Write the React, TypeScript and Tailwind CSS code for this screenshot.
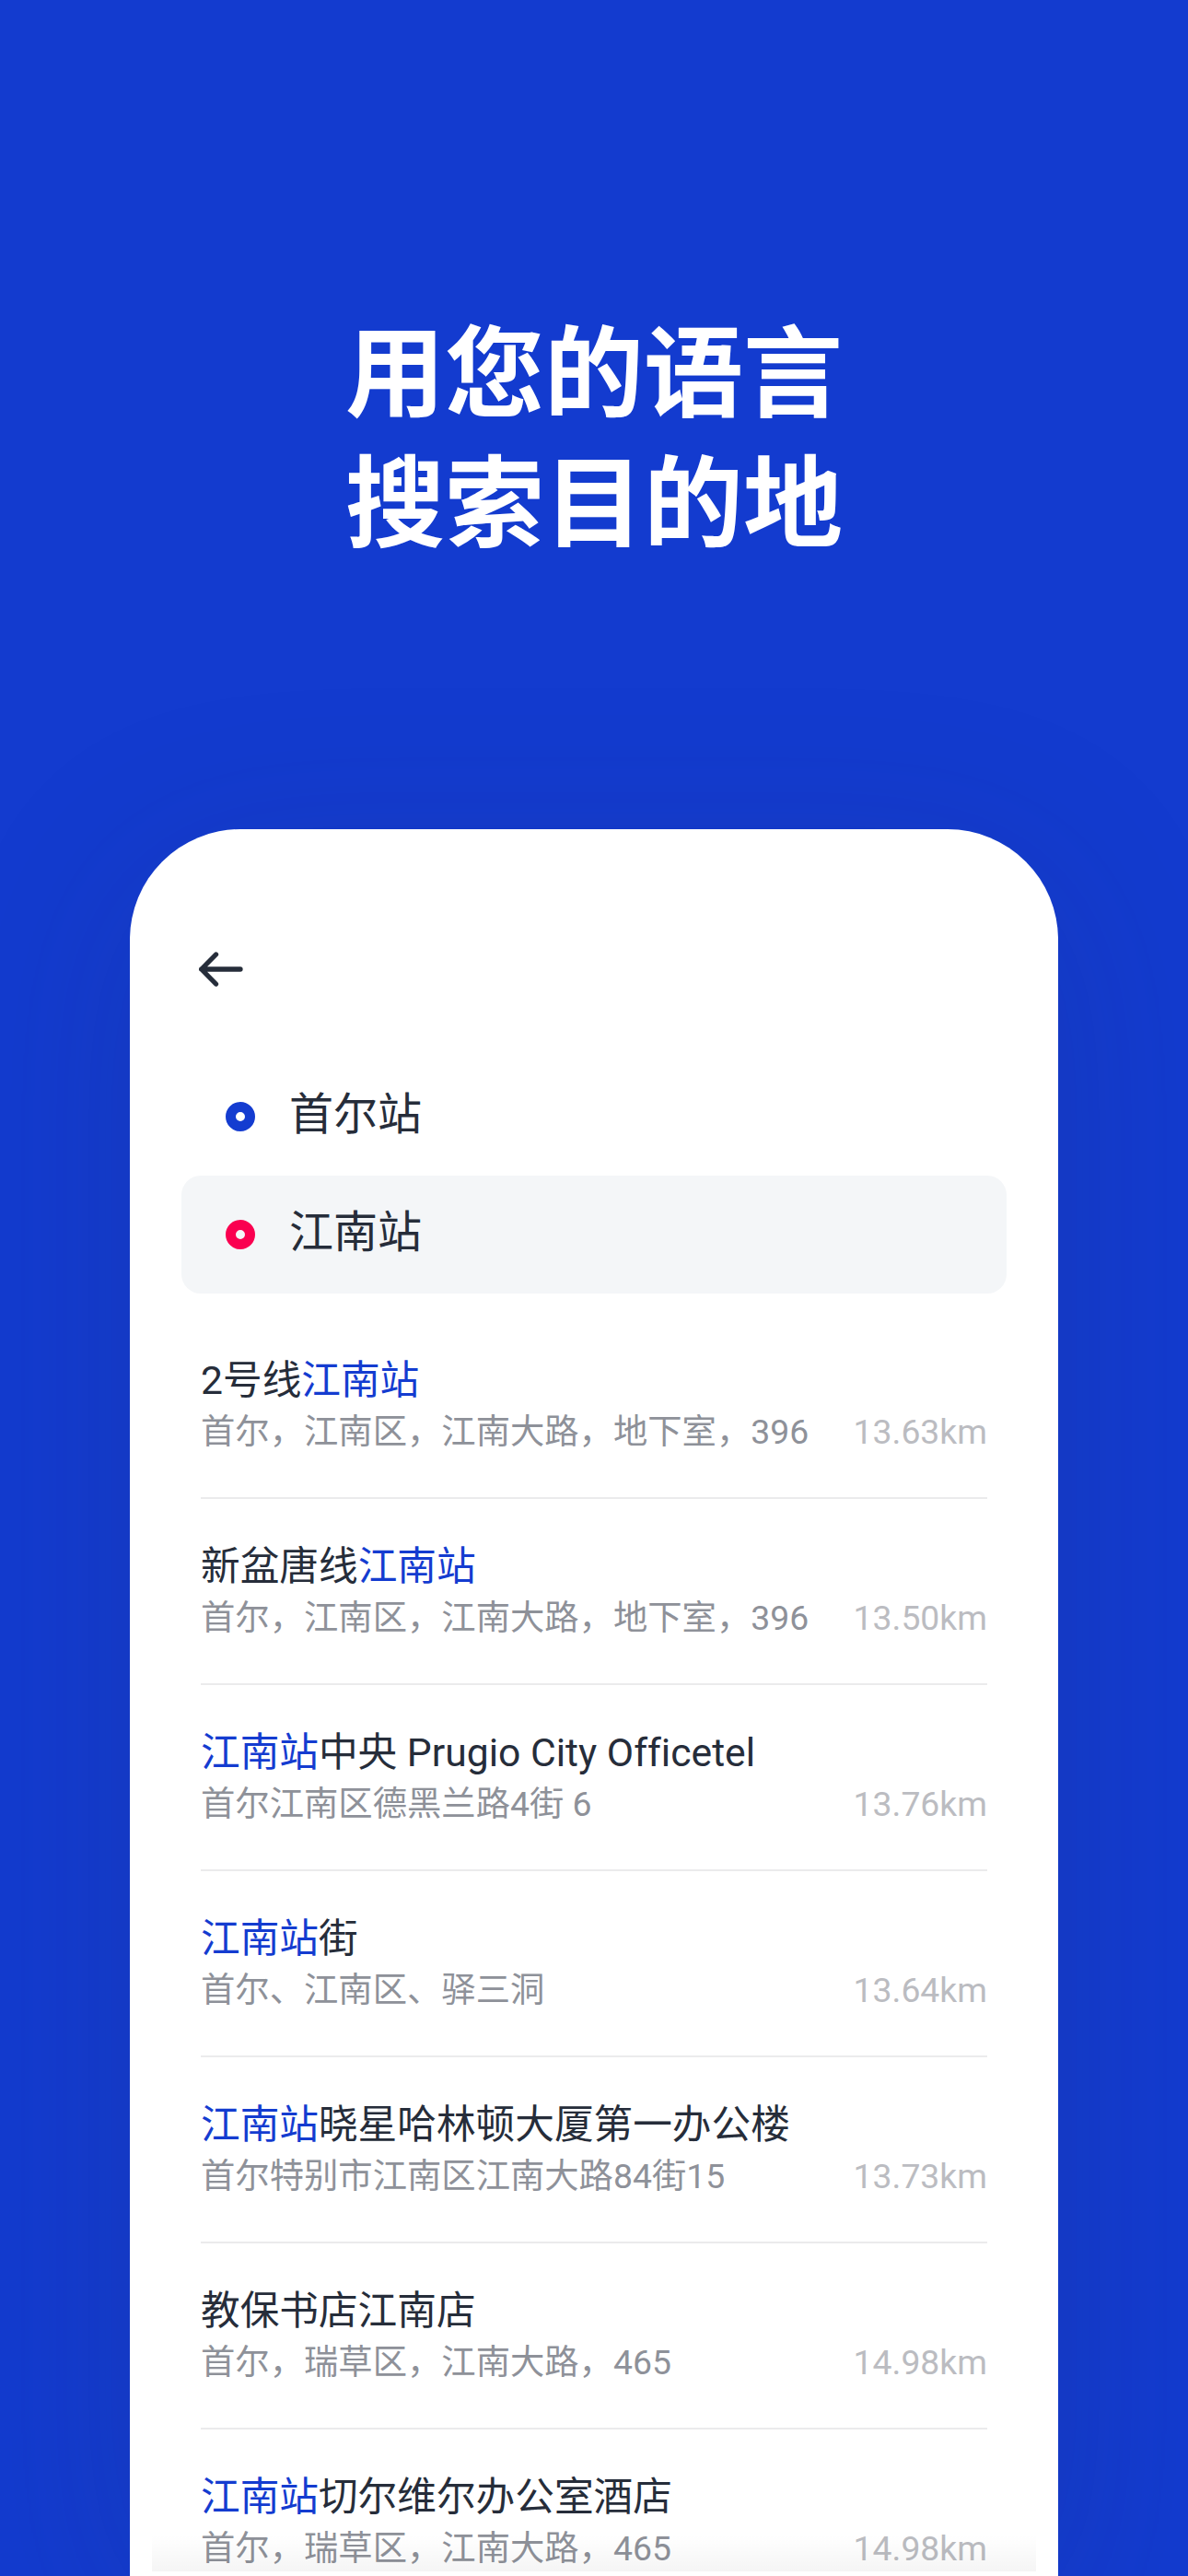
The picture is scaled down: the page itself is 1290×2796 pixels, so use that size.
type Part = { text: string; match?: boolean };

type Place = {
  title: Part[];
  address: string;
  distance: string;
};

const places: Place[] = [
  {
    title: [{ text: "2号线" }, { text: "江南站", match: true }],
    address: "首尔，江南区，江南大路，地下室，396",
    distance: "13.63km",
  },
  {
    title: [{ text: "新盆唐线" }, { text: "江南站", match: true }],
    address: "首尔，江南区，江南大路，地下室，396",
    distance: "13.50km",
  },
  {
    title: [{ text: "江南站", match: true }, { text: "中央 Prugio City Officetel" }],
    address: "首尔江南区德黑兰路4街 6",
    distance: "13.76km",
  },
  {
    title: [{ text: "江南站", match: true }, { text: "街" }],
    address: "首尔、江南区、驿三洞",
    distance: "13.64km",
  },
  {
    title: [{ text: "江南站", match: true }, { text: "晓星哈林顿大厦第一办公楼" }],
    address: "首尔特别市江南区江南大路84街15",
    distance: "13.73km",
  },
  {
    title: [{ text: "教保书店江南店" }],
    address: "首尔，瑞草区，江南大路，465",
    distance: "14.98km",
  },
  {
    title: [{ text: "江南站", match: true }, { text: "切尔维尔办公室酒店" }],
    address: "首尔，瑞草区，江南大路，465",
    distance: "14.98km",
  },
];

function PlaceRow({ place }: { place: Place }) {
  return (
    <li className="h-[202px] border-b-2 border-[#ebebec] pt-[44px]">
      <p className="h-[58px] text-[42.67px] leading-[58px] whitespace-nowrap text-[#262d3a] [font-variant-ligatures:none]">
        {place.title.map((part) => (
          <span key={part.text} className={part.match ? "text-[#143cd0]" : undefined}>
            {part.text}
          </span>
        ))}
      </p>
      <div className="flex h-[54px] items-center justify-between text-[37.33px] leading-[54px] whitespace-nowrap">
        <span className="text-[#8e9199]">{place.address}</span>
        <span className="text-[#bbbcc1]">{place.distance}</span>
      </div>
    </li>
  );
}

export default function App() {
  return (
    <div className="flex h-[2796px] w-[1290px] flex-col items-center overflow-hidden bg-[#133bcf] font-[Roboto,'Noto_Sans_CJK_SC',sans-serif]">
      <h1 className="h-[900px] shrink-0 pt-[337px] text-center text-[108px] leading-[141px] font-bold text-white">
        用您的语言
        <br />
        搜索目的地
      </h1>
      <main className="relative h-[1896px] w-[1008px] shrink-0 rounded-t-[120px] bg-white px-[56px] pt-[128px] shadow-[0_40px_200px_rgba(40,50,90,0.17)]">
        <svg
          className="ml-[16px] h-[48px] w-[52px]"
          viewBox="0 0 52 48"
          fill="none"
          stroke="#262d3a"
          strokeWidth="5.3"
          strokeLinecap="round"
          strokeLinejoin="round"
          aria-label="Back"
        >
          <path d="M48 24H5.7M21.5 8 5.7 24l15.8 16" />
        </svg>
        <div className="mt-[72px] flex h-[128px] items-center pl-[48px] text-[48px] text-[#262d3a]">
          <span className="mr-[37px] size-[32px] rounded-full border-[11px] border-[#143cd0]" />
          <span className="-mt-[4px]">首尔站</span>
        </div>
        <div className="flex h-[128px] items-center rounded-[21px] bg-[#f4f6f8] pl-[48px] text-[48px] text-[#262d3a]">
          <span className="mr-[37px] size-[32px] rounded-full border-[11px] border-[#fa0050]" />
          <span className="-mt-[4px]">江南站</span>
        </div>
        <ul className="mt-[21px] h-[1371px] overflow-hidden px-[21px]">
          {places.map((place) => (
            <PlaceRow key={place.title.map((p) => p.text).join("")} place={place} />
          ))}
        </ul>
        <div className="absolute bottom-[5px] left-[24px] h-[40px] w-[960px] bg-linear-to-b from-black/0 to-black/4" />
      </main>
    </div>
  );
}
